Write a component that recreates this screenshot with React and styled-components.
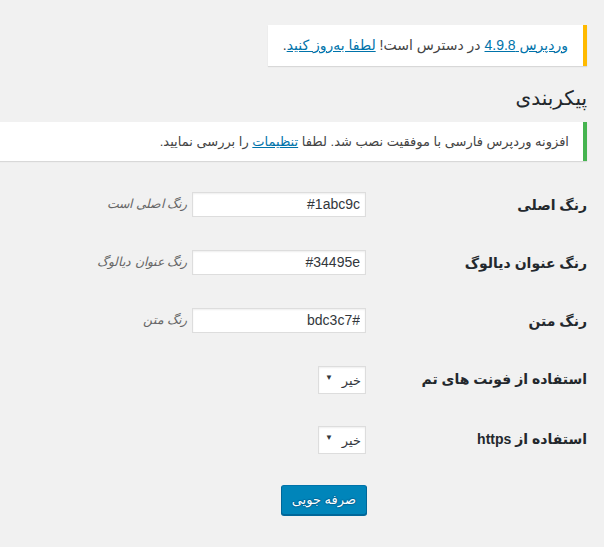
import React from "react";
import styled, { createGlobalStyle } from "styled-components";

const GlobalStyle = createGlobalStyle`
  html, body {
    margin: 0;
    padding: 0;
    background: #f1f1f1;
  }
  body {
    font-family: "Liberation Sans", "DejaVu Sans", sans-serif;
    font-size: 13px;
    color: #444;
    overflow-x: hidden;
  }
`;

const fields = [
  { label: "رنگ اصلی", value: "#1abc9c", hint: "رنگ اصلی است" },
  { label: "رنگ عنوان دیالوگ", value: "#34495e", hint: "رنگ عنوان دیالوگ" },
  { label: "رنگ متن", value: "#bdc3c7", hint: "رنگ متن" },
];

const toggles = ["استفاده از فونت های تم", "استفاده از https"];

export default function App() {
  return (
    <Page>
      <GlobalStyle />
      <UpdateNag>
        <Link href="#">وردپرس 4.9.8</Link> در دسترس است! <Link href="#">لطفا به‌روز کنید</Link>.
      </UpdateNag>
      <Wrap>
        <Title>پیکربندی</Title>
        <Notice>
          <p>
            افزونه وردپرس فارسی با موفقیت نصب شد. لطفا <Link href="#">تنظیمات</Link> را بررسی نمایید.
          </p>
        </Notice>
        <Form onSubmit={(e) => e.preventDefault()}>
          {fields.map((f) => (
            <Row key={f.label}>
              <Label>{f.label}</Label>
              <Field>
                <TextInput type="text" defaultValue={f.value} />{" "}
                <Description>{f.hint}</Description>
              </Field>
            </Row>
          ))}
          {toggles.map((t) => (
            <Row key={t}>
              <Label>{t}</Label>
              <Field>
                <SelectBox>
                  <Select defaultValue="no">
                    <option value="no">خیر</option>
                    <option value="yes">بله</option>
                  </Select>
                </SelectBox>
              </Field>
            </Row>
          ))}
          <Row>
            <Label as="div" $empty />
            <Field>
              <PrimaryButton type="submit">صرفه جویی</PrimaryButton>
            </Field>
          </Row>
        </Form>
      </Wrap>
    </Page>
  );
}

const Page = styled.div`
  direction: rtl;
  padding-right: 17px;
`;

const Link = styled.a`
  color: #0073aa;
  text-decoration: underline;
`;

const UpdateNag = styled.div`
  display: inline-block;
  vertical-align: top;
  margin-top: 25px;
  padding: 11px 15px;
  font-size: 14px;
  line-height: 19px;
  background: #fff;
  border-right: 4px solid #ffba00;
  box-shadow: 0 1px 1px 0 rgba(0, 0, 0, 0.1);
`;

const Wrap = styled.div`
  margin-top: 8px;
`;

const Title = styled.h1`
  margin: 0;
  padding: 9px 0 4px;
  font-size: 20px;
  font-weight: 400;
  line-height: 30px;
  color: #23282d;
`;

const Notice = styled.div`
  margin: 5px 0 15px;
  padding: 1px 12px;
  background: #fff;
  border-right: 4px solid #46b450;
  box-shadow: 0 1px 1px 0 rgba(0, 0, 0, 0.1);

  p {
    margin: 0.5em 0;
    padding: 2px;
    font-size: 13px;
    line-height: 1.5;
  }
`;

const Form = styled.form`
  display: flex;
  flex-direction: column;
`;

const Row = styled.div`
  display: flex;
  align-items: flex-start;
`;

const Label = styled.label`
  flex: 0 0 200px;
  padding: 20px 0 20px 10px;
  font-size: 14px;
  font-weight: 700;
  line-height: 1.3;
  color: #23282d;
  ${(p) => p.$empty && "padding: 0 0 0 10px;"}
`;

const Field = styled.div`
  padding: 15px 10px;
  line-height: 1.3;
`;

const TextInput = styled.input`
  box-sizing: border-box;
  width: 174px;
  height: 25px;
  margin: 1px;
  padding: 2px 5px;
  border: 1px solid #ddd;
  box-shadow: inset 0 1px 2px rgba(0, 0, 0, 0.07);
  background: #fff;
  color: #32373c;
  font-family: "Liberation Sans", "DejaVu Sans", sans-serif;
  font-size: 14px;
  direction: rtl;
  vertical-align: middle;
  outline: none;
`;

const Description = styled.span`
  font-size: 12.5px;
  font-style: italic;
  color: #666;
  vertical-align: middle;
`;

const SelectBox = styled.span`
  position: relative;
  display: inline-block;

  &::after {
    content: "▼";
    position: absolute;
    left: 8px;
    top: 9px;
    font-size: 8px;
    line-height: 8px;
    color: #32373c;
    pointer-events: none;
  }
`;

const Select = styled.select`
  appearance: none;
  box-sizing: border-box;
  width: 48px;
  height: 28px;
  margin: 1px;
  padding: 2px 4px 2px 18px;
  border: 1px solid #ddd;
  box-shadow: inset 0 1px 2px rgba(0, 0, 0, 0.07);
  background: #fff;
  color: #32373c;
  font-family: "Liberation Sans", "DejaVu Sans", sans-serif;
  font-size: 13px;
  direction: rtl;
  vertical-align: middle;
  outline: none;
`;

const PrimaryButton = styled.button`
  height: 30px;
  margin: 0;
  padding: 0 10px 1px;
  font-family: "Liberation Sans", "DejaVu Sans", sans-serif;
  font-size: 13px;
  line-height: 28px;
  color: #fff;
  background: #0085ba;
  border: 1px solid;
  border-color: #0073aa #006799 #006799;
  border-radius: 3px;
  box-shadow: 0 1px 0 #006799;
  text-shadow: 0 -1px 1px #006799, 1px 0 1px #006799, 0 1px 1px #006799,
    -1px 0 1px #006799;
  cursor: pointer;
`;
